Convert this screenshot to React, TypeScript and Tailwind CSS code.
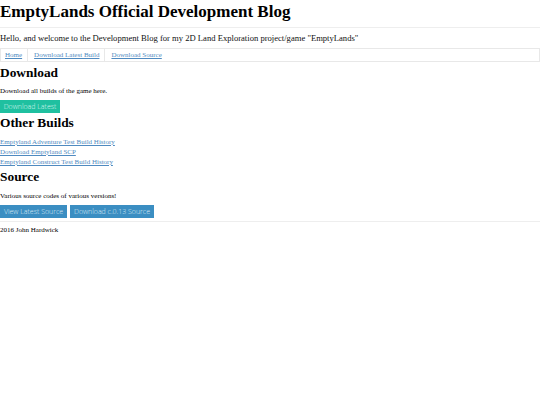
import React from "react";

const serif = { fontFamily: '"Liberation Serif", "Times New Roman", serif' };

export default function App() {
  return (
    <div className="bg-white text-black min-h-[405px] w-[540px]" style={serif}>
      <h1 className="mt-[2px] text-[17px] leading-[20px] font-bold pb-[5px] border-b border-[#eeeeee]">
        EmptyLands Official Development Blog
      </h1>
      <p className="mt-[4px] text-[8.6px] leading-[12px] text-[#111]">
        Hello, and welcome to the Development Blog for my 2D Land Exploration project/game "EmptyLands"
      </p>
      <nav className="mt-[4px] flex h-[14px] border border-[#e8e8e8] text-[7px] leading-[12px]">
        <a href="#" className="pl-[4px] pr-[5px] border-r border-[#e8e8e8] underline text-[#4f8ac0]">Home</a>
        <a href="#" className="pl-[6px] pr-[5px] border-r border-[#e8e8e8] underline text-[#4f8ac0]">Download Latest Build</a>
        <a href="#" className="pl-[6px] underline text-[#4f8ac0]">Download Source</a>
      </nav>
      <h2 className="mt-[3px] text-[13.4px] leading-[16px] font-bold">Download</h2>
      <p className="mt-[5px] text-[7px] leading-[10px]">Download all builds of the game here.</p>
      <div className="mt-[4px] flex">
        <button
          className="h-[13px] w-[60px] bg-[#1fc0a0] text-[#d8f5ee] text-[7px] leading-[13px] font-light"
          style={{ fontFamily: '"Open Sans", "Liberation Sans", sans-serif' }}
        >
          Download Latest
        </button>
      </div>
      <h2 className="mt-[2px] text-[13.4px] leading-[16px] font-bold">Other Builds</h2>
      <div className="mt-[6px] flex flex-col items-start text-[7px] leading-[10px]">
        <a href="#" className="underline text-[#4f8ac0]">Emptyland Adventure Test Build History</a>
        <a href="#" className="underline text-[#4f8ac0]">Download Emptyland SCP</a>
        <a href="#" className="underline text-[#4f8ac0]">Emptyland Construct Test Build History</a>
      </div>
      <h2 className="mt-[2px] text-[13.4px] leading-[16px] font-bold">Source</h2>
      <p className="mt-[6px] text-[7px] leading-[10px]">Various source codes of various versions!</p>
      <div
        className="mt-[4px] flex gap-[3px]"
        style={{ fontFamily: '"Open Sans", "Liberation Sans", sans-serif' }}
      >
        <button className="h-[13px] w-[67px] bg-[#3b8ec2] text-[#dcebf5] text-[7px] leading-[13px] font-light">
          View Latest Source
        </button>
        <button className="h-[13px] w-[84px] bg-[#3b8ec2] text-[#dcebf5] text-[7px] leading-[13px] font-light">
          Download c.0.13 Source
        </button>
      </div>
      <div className="mt-[3px] border-t border-[#eeeeee]" />
      <p className="mt-[3px] text-[7px] leading-[10px]">2016 John Hardwick</p>
    </div>
  );
}
